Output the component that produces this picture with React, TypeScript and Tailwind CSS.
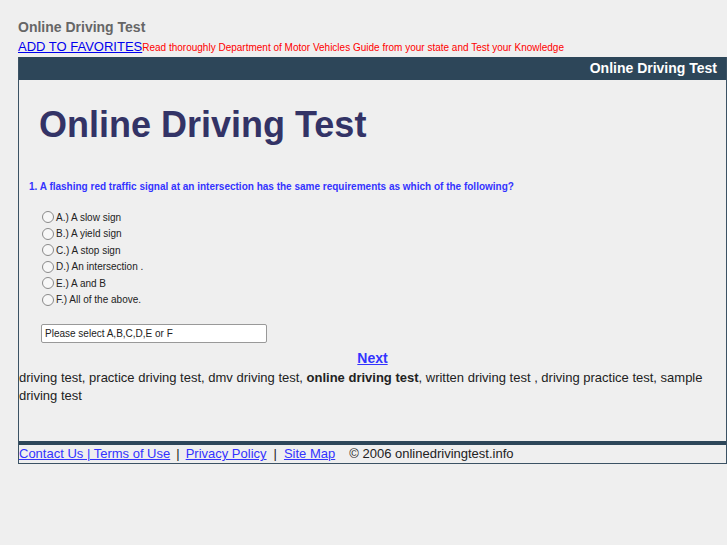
const FONT = "font-['Liberation_Sans',Arial,sans-serif]";

const answers = [
  'A.) A slow sign',
  'B.) A yield sign',
  'C.) A stop sign',
  'D.) An intersection .',
  'E.) A and B',
  'F.) All of the above.',
];

function Radio() {
  return (
    <span className="mr-[2px] inline-block h-[12px] w-[12px] shrink-0 rounded-full border border-[#8a8a8a] bg-[#f7f7f7]" />
  );
}

export default function App() {
  return (
    <div className={`${FONT} min-h-[545px] bg-[#efefef] pl-[18px] text-[#222]`}>
      <div className="pt-[19px] text-[14px] font-bold leading-[16px] text-[#666]">Online Driving Test</div>
      <div className="mt-[4px] flex items-baseline leading-[16px]">
        <a href="#" className="text-[13px] text-[#0000ee] underline">
          ADD TO FAVORITES
        </a>
        <span className="text-[10px] text-[#ff0000]">
          Read thoroughly Department of Motor Vehicles Guide from your state and Test your Knowledge
        </span>
      </div>

      <div className="mt-px w-[709px] border-x border-b border-[#3b5264]">
        <div className="flex h-[23px] items-center justify-end bg-[#2d4659] pr-[9px] text-[14px] font-bold text-white">
          Online Driving Test
        </div>

        <h1 className="mt-[27px] pl-[20px] text-[36px] font-bold leading-[36px] text-[#333366]">
          Online Driving Test
        </h1>

        <p className="mt-[38px] pl-[10px] text-[10px] font-bold leading-[12px] text-[#3333ff]">
          1. A flashing red traffic signal at an intersection has the same requirements as which of the following?
        </p>

        <div className="mt-[16px] flex flex-col pl-[23px] text-[10px] text-[#222]">
          {answers.map((a) => (
            <label key={a} className="flex h-[16.5px] items-center">
              <Radio />
              <span>{a}</span>
            </label>
          ))}
        </div>

        <div className="mt-[16px] pl-[22px]">
          <div className="flex h-[19px] w-[226px] items-center rounded-[2px] border border-[#999] bg-white pl-[3px] text-[10px] text-[#222]">
            Please select A,B,C,D,E or F
          </div>
        </div>

        <div className="mt-[6px] text-center text-[14px] font-bold leading-[18px]">
          <a href="#" className="text-[#3333ff] underline">
            Next
          </a>
        </div>

        <div className="mt-[2px] text-[13px] leading-[18px] text-[#222]">
          <span>driving test, practice driving test, dmv driving test, </span>
          <b>online driving test</b>
          <span>, written driving test , driving practice test, sample </span>
          <span>driving test</span>
        </div>

        <div className="mt-[36px] h-[4px] bg-[#2d4659]" />

        <div className="flex h-[18px] items-center text-[13px] text-[#222]">
          <a href="#" className="text-[#3333ff] underline">
            Contact Us | Terms of Use
          </a>
          <span className="px-[6px]">|</span>
          <a href="#" className="text-[#3333ff] underline">
            Privacy Policy
          </a>
          <span className="px-[7px]">|</span>
          <a href="#" className="text-[#3333ff] underline">
            Site Map
          </a>
          <span className="pl-[14px]">© 2006 onlinedrivingtest.info</span>
        </div>
      </div>
    </div>
  );
}
